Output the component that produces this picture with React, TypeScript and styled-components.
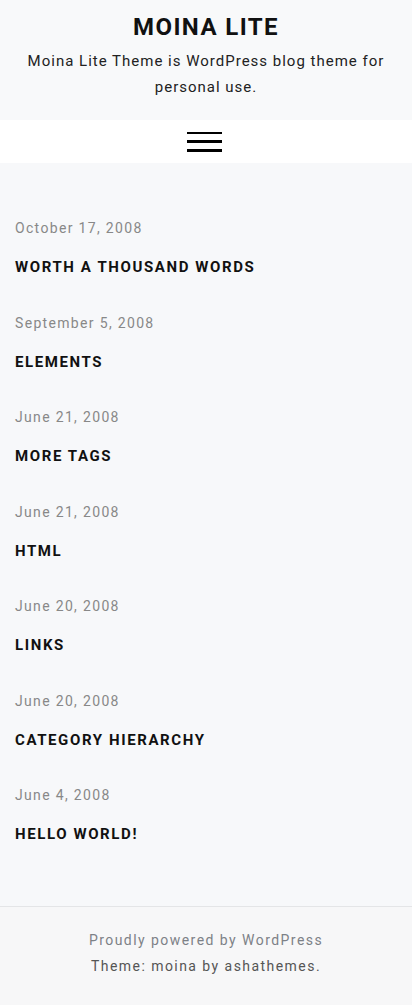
import React from "react"
import styled, { createGlobalStyle } from "styled-components"

const GlobalStyle = createGlobalStyle`
  html, body {
    margin: 0;
    padding: 0;
    background: #f7f8fa;
    font-family: Roboto, "Liberation Sans", sans-serif;
  }
`

const Page = styled.div`
  min-height: 1005px;
  display: flex;
  flex-direction: column;
  background: #f7f8fa;
`

const Header = styled.header`
  padding: 10px 15px 20px;
  text-align: center;
  background: #f8f9fa;
`

const SiteTitle = styled.h1`
  margin: 0 0 4px;
  font-size: 24px;
  line-height: 34px;
  font-weight: 700;
  letter-spacing: 1.4px;
  color: #111;
`

const Description = styled.p`
  margin: 0;
  font-size: 15px;
  line-height: 26px;
  letter-spacing: 1px;
  color: #222;
`

const Nav = styled.nav`
  height: 43px;
  background: #fff;
  display: flex;
  align-items: center;
  justify-content: center;
`

const MenuToggle = styled.button`
  width: 35px;
  height: 20px;
  margin-right: 3px;
  padding: 0;
  border: 0;
  background: none;
  display: flex;
  flex-direction: column;
  justify-content: space-between;
  cursor: pointer;
`

const Bar = styled.span`
  display: block;
  height: 2.5px;
  background: #000;
`

const Main = styled.main`
  flex: 1;
  padding: 53px 15px 28.5px;
`

const Post = styled.article`
  padding-bottom: 31.5px;
`

const PostDate = styled.div`
  font-size: 14px;
  line-height: 24px;
  letter-spacing: 1.33px;
  color: #888;
`

const PostTitle = styled.h2`
  margin: 15px 0 0;
  font-size: 15px;
  line-height: 24px;
  font-weight: 700;
  letter-spacing: 1.6px;
  text-transform: uppercase;
  color: #111;
`

const Footer = styled.footer`
  border-top: 1px solid #e4e5e7;
  background: #f7f7f8;
  padding: 20px 15px 26px;
  text-align: center;
  font-size: 14px;
  line-height: 26px;
  letter-spacing: 1.45px;
`

const FooterLine = styled.div<{ $muted?: boolean }>`
  color: ${p => (p.$muted ? "#7d8187" : "#555")};
`

const posts = [
  { date: "October 17, 2008", title: "Worth a Thousand Words" },
  { date: "September 5, 2008", title: "Elements" },
  { date: "June 21, 2008", title: "More Tags" },
  { date: "June 21, 2008", title: "HTML" },
  { date: "June 20, 2008", title: "Links" },
  { date: "June 20, 2008", title: "Category Hierarchy" },
  { date: "June 4, 2008", title: "Hello world!" },
]

const App = () => {
  return (
    <Page>
      <GlobalStyle />
      <Header>
        <SiteTitle>MOINA LITE</SiteTitle>
        <Description>
          Moina Lite Theme is WordPress blog theme for personal use.
        </Description>
      </Header>
      <Nav>
        <MenuToggle aria-label="Menu">
          <Bar />
          <Bar />
          <Bar />
        </MenuToggle>
      </Nav>
      <Main>
        {posts.map((post, index) => (
          <Post key={index}>
            <PostDate>{post.date}</PostDate>
            <PostTitle>{post.title}</PostTitle>
          </Post>
        ))}
      </Main>
      <Footer>
        <FooterLine $muted>Proudly powered by WordPress</FooterLine>
        <FooterLine>Theme: moina by ashathemes.</FooterLine>
      </Footer>
    </Page>
  )
}

export default App
